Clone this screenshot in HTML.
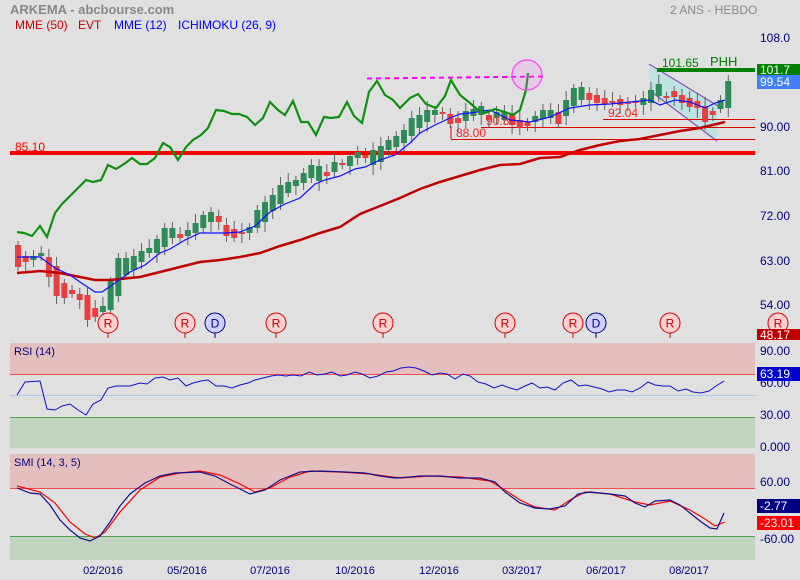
<!DOCTYPE html><html><head><meta charset="utf-8"><style>
body{margin:0;background:#e0e0e0;}
svg{display:block;font-family:"Liberation Sans",sans-serif;}
</style></head><body>
<svg id="s" width="800" height="580" viewBox="0 0 800 580" xmlns="http://www.w3.org/2000/svg">
<rect width="800" height="580" fill="#e0e0e0"/>
<text x="10" y="14" font-size="13" font-weight="bold" fill="#888">ARKEMA - abcbourse.com</text>
<text x="670" y="14" font-size="12" fill="#888">2 ANS - HEBDO</text>
<text x="15" y="29" font-size="12" fill="#cc0000">MME (50)</text>
<text x="78" y="29" font-size="12" fill="#cc0000">EVT</text>
<text x="114" y="29" font-size="12" fill="#0000ee">MME (12)</text>
<text x="178" y="29" font-size="12" fill="#0000ee">ICHIMOKU (26, 9)</text>

<rect x="10" y="343" width="745" height="31" fill="#e5bebe"/>
<rect x="10" y="417" width="745" height="31" fill="#c0d4c0"/>
<line x1="10" y1="374.5" x2="755" y2="374.5" stroke="#f05050"/>
<line x1="10" y1="395.5" x2="755" y2="395.5" stroke="#a8c8f0"/>
<line x1="10" y1="417.5" x2="755" y2="417.5" stroke="#50a050"/>
<text x="14" y="355" font-size="11" fill="#000080">RSI (14)</text>
<rect x="10" y="454" width="745" height="34" fill="#e5bebe"/>
<rect x="10" y="536" width="745" height="24" fill="#c0d4c0"/>
<line x1="10" y1="488.5" x2="755" y2="488.5" stroke="#f05050"/>
<line x1="10" y1="536.5" x2="755" y2="536.5" stroke="#50a050"/>
<text x="14" y="466" font-size="11" fill="#000080">SMI (14, 3, 5)</text>

<polygon points="649,64 718,106 717,141 649,90" fill="#bfe3e3"/>
<line x1="649" y1="64" x2="718" y2="106" stroke="#9050b0" stroke-width="1.3"/>
<line x1="649" y1="90" x2="717" y2="141" stroke="#9050b0" stroke-width="1.3"/>

<line x1="10" y1="153" x2="755" y2="153" stroke="#ff0000" stroke-width="4"/>
<text x="15" y="151" font-size="12" fill="#ff0000">85.10</text>
<line x1="451" y1="139.5" x2="755" y2="139.5" stroke="#dd0000"/>
<line x1="451" y1="126" x2="451" y2="139" stroke="#dd0000"/>
<text x="456" y="137" font-size="12" fill="#ff2020">88.00</text>
<line x1="481" y1="127.5" x2="755" y2="127.5" stroke="#dd0000"/>
<line x1="603" y1="119.5" x2="755" y2="119.5" stroke="#dd0000"/>
<text x="608" y="117" font-size="12" fill="#ff2020">92.04</text>
<line x1="367" y1="78.5" x2="547" y2="76.5" stroke="#ff00ff" stroke-width="2" stroke-dasharray="5,4"/>
<line x1="657" y1="70" x2="755" y2="70" stroke="#008000" stroke-width="4"/>
<text x="662" y="67" font-size="12" fill="#008000">101.65</text>
<text x="710" y="66" font-size="13" fill="#008000">PHH</text>

<g id="candles"></g>
<text x="486" y="125" font-size="12" fill="#ff2020">90.50</text>

<polyline fill="none" stroke="#c00000" stroke-width="2.5" points="17,273 40,271 60,273 80,277 95,280 110,280 140,277 160,272 180,267 200,262 220,260 240,257 260,253 280,246 300,240 320,233 340,227 360,214 380,206 400,198 420,189 440,182 460,176 480,170 500,165 520,164 540,158 560,157 580,150 600,145 620,141 640,139 660,135 680,131 700,128 725,122"/>
<polyline fill="none" stroke="#1010ff" stroke-width="1.2" points="17,257 40,257 55,268 70,275 80,282 95,292 102,292 115,283 130,272 145,265 160,253 170,249 185,240 200,233 208,233 225,233 240,232 255,226 270,212 285,204 300,198 315,184 325,180 340,176 355,169 365,167 380,160 395,155 410,143 420,133 435,125 450,118 460,114 470,113 490,110 510,120 530,122 550,117 570,108 590,105 610,104 630,102 650,100 660,105 675,100 690,102 705,108 715,103 725,100"/>
<polyline fill="none" stroke="#109010" stroke-width="2.2" points="17,232 24,233 32,236 40,226 47,237 55,213 62,204 70,196 78,188 86,180 93,182 101,180 108,165 116,169 124,164 132,158 140,164 147,164 155,158 163,143 170,147 178,160 186,147 193,140 201,135 208,128 216,110 224,111 232,114 239,114 247,117 255,125 263,118 270,102 278,110 285,115 293,101 301,122 308,122 316,135 324,117 331,118 339,117 347,102 354,116 362,123 369,92 377,81 385,95 393,100 400,108 410,98 418,94 426,104 436,108 445,96 451,80 460,95 470,103 478,110 485,113 495,109 505,112 513,115 520,110 526,90 528,73"/>
<circle cx="527" cy="75" r="15" fill="rgba(255,120,255,0.2)" stroke="#ff40ff" stroke-width="1.2"/>

<g id="mk"></g>

<polyline fill="none" stroke="#1010cc" stroke-width="1" points="17,395 25,382 40,381 47,409 55,410 62,406 70,404 78,410 86,415 93,404 101,400 108,388 116,386 130,386 140,383 147,384 155,378 163,377 170,380 178,378 186,386 193,383 201,381 208,380 216,386 224,386 232,388 240,385 248,383 255,380 263,378 271,376 278,375 286,376 293,375 301,376 309,372 317,375 325,374 332,372 340,376 347,375 355,372 362,374 370,378 378,376 386,372 393,371 401,368 409,367 416,368 424,371 432,375 440,373 447,374 455,379 463,374 470,376 478,382 486,384 494,388 502,385 510,388 517,390 525,386 532,383 540,388 547,387 555,390 563,383 571,380 579,386 586,385 594,387 602,389 609,392 617,390 625,390 632,392 640,388 648,382 655,385 663,386 670,386 678,391 686,389 693,392 701,393 709,391 716,386 724,381"/>
<polyline fill="none" stroke="#ff0000" stroke-width="1.2" points="17,486 40,492 55,503 70,522 85,534 95,538 105,532 120,512 140,490 160,477 180,473 200,471 220,475 240,484 255,492 270,488 290,477 310,471 340,472 370,474 400,478 430,476 460,477 490,481 505,490 520,500 535,507 555,510 570,500 585,492 610,494 635,502 650,505 670,501 690,510 705,519 715,526 725,522"/>
<polyline fill="none" stroke="#101090" stroke-width="1.2" points="17,488 30,493 40,494 50,505 60,520 70,530 80,538 90,541 100,536 110,522 120,506 130,494 145,483 160,476 175,473 200,472 215,476 230,484 250,494 265,490 280,480 300,472 320,471 345,472 365,473 380,476 395,478 410,477 420,476 440,476 460,478 480,478 495,482 505,492 520,503 535,508 550,509 565,506 578,494 590,492 610,494 625,496 635,503 645,507 655,501 670,500 680,505 690,513 700,521 710,528 717,529 724,513"/>

<g font-size="12" fill="#000080">
<text x="760" y="42">108.0</text>
<text x="760" y="131">90.00</text>
<text x="760" y="175">81.00</text>
<text x="760" y="220">72.00</text>
<text x="760" y="265">63.00</text>
<text x="760" y="309">54.00</text>
<text x="760" y="355">90.00</text>
<text x="760" y="387">60.00</text>
<text x="760" y="419">30.00</text>
<text x="760" y="451">0.000</text>
<text x="760" y="486">60.00</text>
<text x="760" y="543">-60.00</text>
</g>
<rect x="757" y="64" width="43" height="12" fill="#008000"/><text x="760" y="74" font-size="12" fill="#fff">101.7</text>
<rect x="757" y="75" width="43" height="14" fill="#4080ff"/><text x="760" y="86" font-size="12" fill="#fff">99.54</text>
<rect x="757" y="329" width="43" height="11" fill="#c00000"/><text x="760" y="339" font-size="12" fill="#fff">48.17</text>
<rect x="757" y="367" width="43" height="14" fill="#0000cc"/><text x="760" y="378" font-size="12" fill="#fff">63.19</text>
<rect x="757" y="499" width="43" height="14" fill="#000080"/><text x="760" y="510" font-size="12" fill="#fff">-2.77</text>
<rect x="757" y="516" width="43" height="14" fill="#ff0000"/><text x="760" y="527" font-size="12" fill="#fff">-23.01</text>

<g font-size="11" fill="#000080" text-anchor="middle">
<text x="103" y="574">02/2016</text><text x="187" y="574">05/2016</text><text x="270" y="574">07/2016</text><text x="355" y="574">10/2016</text><text x="439" y="574">12/2016</text><text x="522" y="574">03/2017</text><text x="606" y="574">06/2017</text><text x="689" y="574">08/2017</text>
</g>
</svg>
<script>
var d=[["r",245,267],["r",256,262],["g",260,256],["g",256,253],["r",257,277],["r",266,296],["r",283,298],["r",290,294],["r",294,300],["r",295,320],["r",308,317],["g",312,306],["g",310,281],["g",296,258],["g",275,258],["g",270,256],["g",262,251],["g",253,248],["g",253,239],["g",247,228],["g",238,228],["r",234,238],["g",236,230],["g",233,223],["g",228,215],["g",222,212],["r",216,222],["r",225,236],["r",229,238],["r",232,234],["g",233,227],["g",228,210],["g",222,202],["g",211,195],["g",204,185],["g",193,182],["g",186,180],["g",183,173],["g",178,165],["g",181,166],["r",172,176],["g",172,162],["r",163,164],["g",166,156],["g",158,152],["r",155,158],["g",165,150],["g",162,146],["g",150,140],["g",147,136],["g",143,130],["g",136,118],["g",128,115],["g",122,110],["g",115,110],["r",112,113],["r",114,124],["r",118,123],["g",121,111],["g",116,109],["g",115,106],["r",115,120],["g",118,112],["g",120,112],["r",113,125],["r",120,128],["r",122,126],["g",122,116],["g",119,110],["g",118,110],["r",112,124],["g",116,100],["g",106,88],["g",100,87],["r",93,100],["r",95,103],["r",98,104],["r",101,103],["r",99,105],["r",102,104],["r",101,103],["g",105,98],["g",103,90],["g",96,84],["r",96,98],["r",91,97],["r",95,103],["r",98,107],["r",101,108],["r",106,122],["r",111,115],["g",109,100],["g",108,81]];
var g=document.getElementById("candles"),h="";
d.forEach(function(c,i){var x=18+i*7.72,t=Math.min(c[1],c[2]),b=Math.max(c[1],c[2]);if(b-t<2)b=t+2;
var hi=t-4-(i*7%6),lo=b+4+(i*5%7);
h+='<line x1="'+x+'" y1="'+hi+'" x2="'+x+'" y2="'+lo+'" stroke="#555" stroke-width="0.9"/>';
h+='<rect x="'+(x-3)+'" y="'+t+'" width="6" height="'+(b-t)+'" fill="'+(c[0]=="g"?"#2e8b57":"#e84040")+'"/>';});
g.innerHTML=h;
var m=[[108,"R"],[185,"R"],[215,"D"],[276,"R"],[383,"R"],[505,"R"],[573,"R"],[596,"D"],[670,"R"],[778,"R"]],k="";
m.forEach(function(a){var R=a[1]=="R";k+='<line x1="'+a[0]+'" y1="333" x2="'+a[0]+'" y2="338" stroke="'+(R?"#d00000":"#000080")+'"/><circle cx="'+a[0]+'" cy="323" r="10" fill="'+(R?"#ffd0d0":"#d0d0ff")+'" stroke="'+(R?"#d00000":"#000080")+'"/><text x="'+a[0]+'" y="327.5" font-size="12" text-anchor="middle" fill="'+(R?"#c00000":"#000080")+'">'+a[1]+'</text>';});
document.getElementById("mk").innerHTML=k;
</script>
</body></html>
